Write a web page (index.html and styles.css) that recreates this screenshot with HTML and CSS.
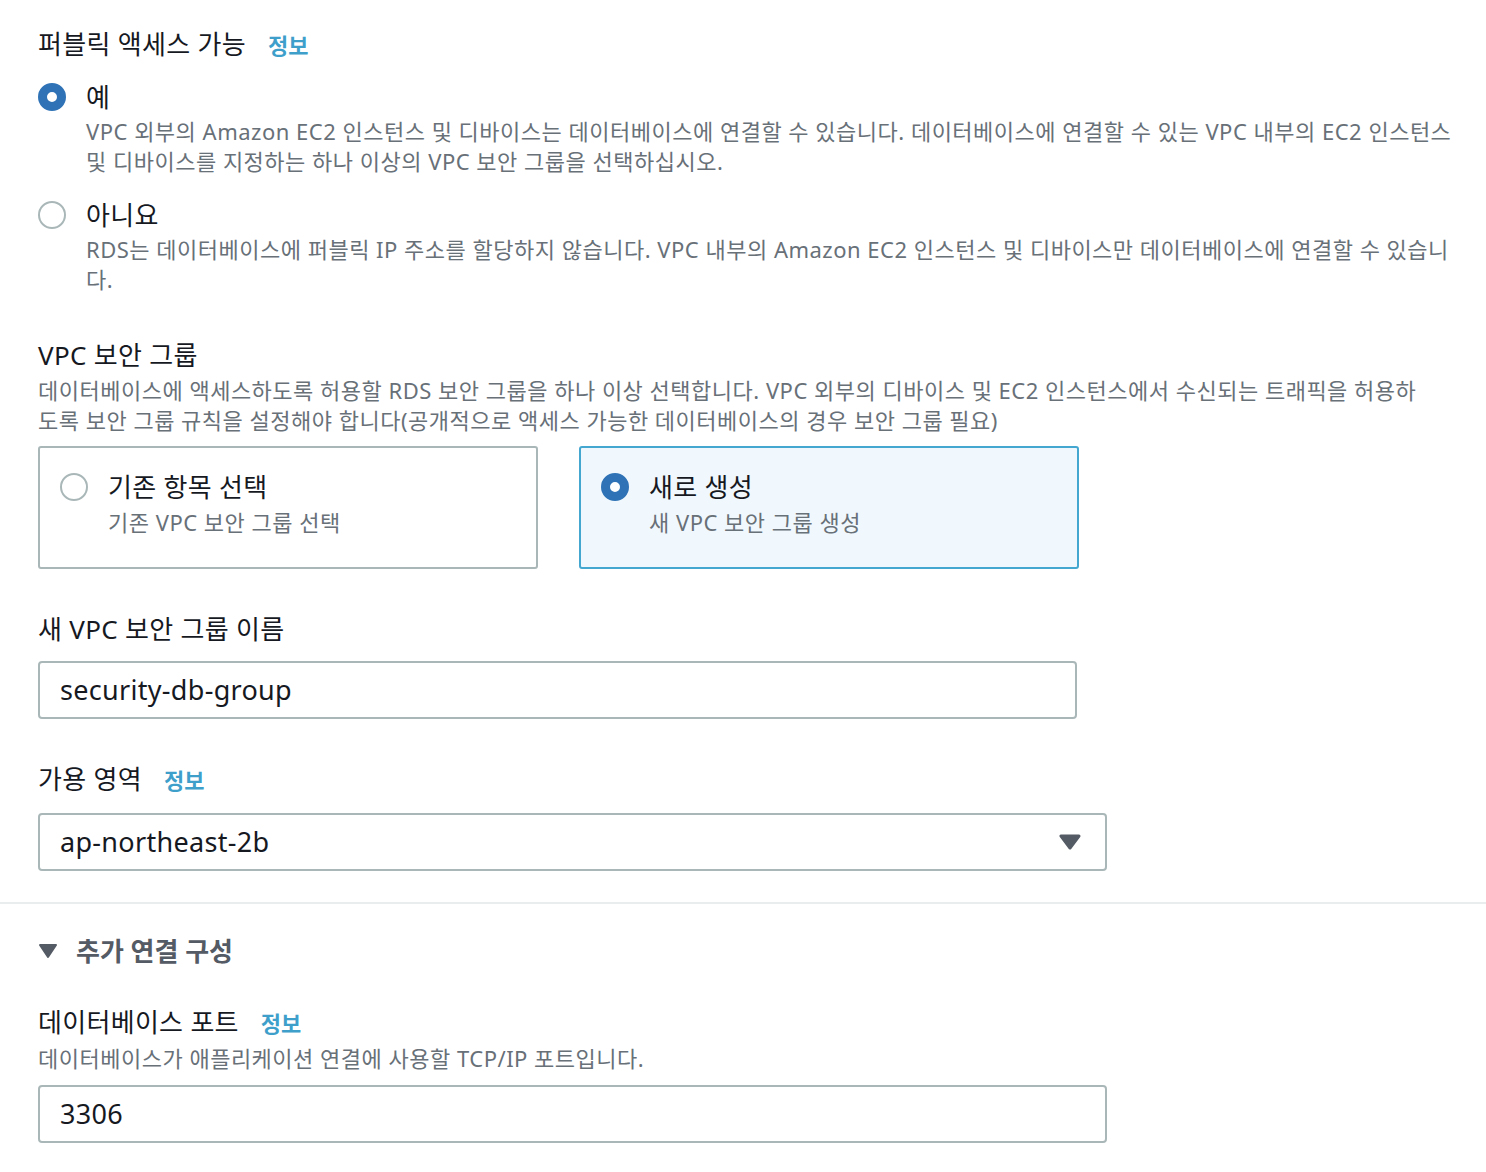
FILE: index.html
```html
<!DOCTYPE html>
<html lang="ko">
<head>
<meta charset="utf-8">
<link rel="stylesheet" href="styles.css">
</head>
<body>
<div class="section">
  <div class="heading">퍼블릭 액세스 가능<a class="info">정보</a></div>
  <div class="radio-option first">
    <span class="radio checked"></span>
    <div class="radio-body">
      <div class="radio-label">예</div>
      <div class="desc">VPC 외부의 Amazon EC2 인스턴스 및 디바이스는 데이터베이스에 연결할 수 있습니다. 데이터베이스에 연결할 수 있는 VPC 내부의 EC2 인스턴스 및 디바이스를 지정하는 하나 이상의 VPC 보안 그룹을 선택하십시오.</div>
    </div>
  </div>
  <div class="radio-option second">
    <span class="radio"></span>
    <div class="radio-body">
      <div class="radio-label">아니요</div>
      <div class="desc">RDS는 데이터베이스에 퍼블릭 IP 주소를 할당하지 않습니다. VPC 내부의 Amazon EC2 인스턴스 및 디바이스만 데이터베이스에 연결할 수 있습니다.</div>
    </div>
  </div>

  <div class="heading vpc">VPC 보안 그룹</div>
  <div class="desc vpc-desc">데이터베이스에 액세스하도록 허용할 RDS 보안 그룹을 하나 이상 선택합니다. VPC 외부의 디바이스 및 EC2 인스턴스에서 수신되는 트래픽을 허용하도록 보안 그룹 규칙을 설정해야 합니다(공개적으로 액세스 가능한 데이터베이스의 경우 보안 그룹 필요)</div>
  <div class="tiles">
    <div class="tile">
      <span class="radio"></span>
      <div class="radio-body">
        <div class="radio-label">기존 항목 선택</div>
        <div class="desc">기존 VPC 보안 그룹 선택</div>
      </div>
    </div>
    <div class="tile selected">
      <span class="radio checked"></span>
      <div class="radio-body">
        <div class="radio-label">새로 생성</div>
        <div class="desc">새 VPC 보안 그룹 생성</div>
      </div>
    </div>
  </div>

  <div class="heading field-label">새 VPC 보안 그룹 이름</div>
  <div class="input narrow">security-db-group</div>

  <div class="heading field-label">가용 영역<a class="info">정보</a></div>
  <div class="input select">
    <span>ap-northeast-2b</span>
    <svg class="caret" width="22" height="16" viewBox="0 0 22 16"><path d="M2 2 L20 2 L11 14 Z" fill="#545b64" stroke="#545b64" stroke-width="3" stroke-linejoin="round"/></svg>
  </div>
</div>

<div class="divider"></div>

<div class="section lower">
  <div class="expander">
    <svg class="exp-caret" width="20" height="16" viewBox="0 0 20 16"><path d="M2 2 L18 2 L10 14 Z" fill="#545b64" stroke="#545b64" stroke-width="2" stroke-linejoin="round"/></svg>
    <span>추가 연결 구성</span>
  </div>
  <div class="heading port-label">데이터베이스 포트<a class="info">정보</a></div>
  <div class="desc port-desc">데이터베이스가 애플리케이션 연결에 사용할 TCP/IP 포트입니다.</div>
  <div class="input">3306</div>
</div>
</body>
</html>
```

FILE: styles.css
```css
* { box-sizing: border-box; }
html, body { margin: 0; padding: 0; background: #fff; }
body {
  font-family: "Noto Sans", "Noto Sans CJK KR", sans-serif;
  color: #16191f;
  width: 1486px;
}
.section { padding: 27px 20px 0 38px; }
.heading { font-size: 26px; line-height: 34px; letter-spacing: 0.3px; color: #16191f; }
.info { color: #3f9fcb; font-weight: 700; font-size: 22px; letter-spacing: 0; margin-left: 22px; text-decoration: none; }
.desc { font-size: 22px; line-height: 30px; letter-spacing: 0.5px; color: #687078; }

.radio-option { display: flex; align-items: flex-start; }
.radio-option.first { margin-top: 18px; }
.radio-option.second { margin-top: 22px; }
.radio {
  flex: none;
  width: 28px; height: 28px;
  border-radius: 50%;
  border: 2px solid #aab7b8;
  background: #fff;
  margin-top: 3px;
}
.radio.checked { border: 9px solid #2f73b6; }
.radio-body { margin-left: 20px; flex: 1; }
.radio-label { font-size: 26px; line-height: 34px; letter-spacing: 0.3px; margin-bottom: 2px; }

.heading.vpc { margin-top: 44px; }
.vpc-desc { margin-top: 3px; padding-right: 30px; }

.tiles { display: flex; gap: 41px; margin-top: 11px; }
.tile {
  width: 500px; height: 123px;
  border: 2px solid #aab7b8;
  border-radius: 3px;
  display: flex; align-items: flex-start;
  padding: 22px 20px 0 20px;
}
.tile .radio { margin-top: 3px; }
.tile .radio-label { margin-bottom: 3px; }
.tile.selected { border-color: #44a7d0; background: #f1f8fd; }

.field-label { margin-top: 43px; }
.input {
  margin-top: 15px;
  width: 1069px; height: 58px;
  border: 2px solid #aab7b8;
  border-radius: 4px;
  padding: 0 20px;
  font-size: 27px; line-height: 54px; letter-spacing: 0.3px;
  color: #16191f;
}
.input.narrow { width: 1039px; }
.input.select { display: flex; justify-content: space-between; align-items: center; margin-top: 16px; }
.caret { margin-right: 4px; }

.divider { margin-top: 31px; height: 2px; background: #eaeded; width: 100%; }

.section.lower { padding-top: 30px; }
.expander { display: flex; align-items: center; font-size: 26px; line-height: 34px; font-weight: 700; color: #545b64; }
.exp-caret { margin-right: 18px; }
.port-label { margin-top: 37px; }
.port-desc { margin-top: 3px; }
.lower .input { margin-top: 12px; height: 58px; }
```
